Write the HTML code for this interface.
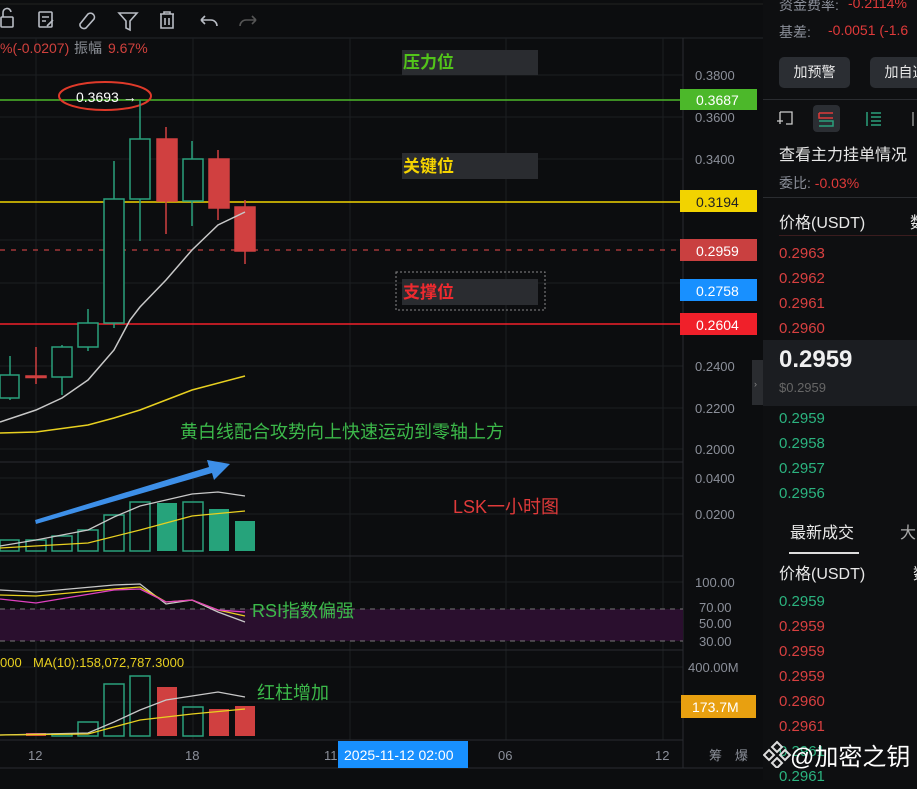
<!DOCTYPE html>
<html><head><meta charset="utf-8"><style>
html,body{margin:0;padding:0;width:917px;height:780px;overflow:hidden;background:#0c0d0f;font-family:"Liberation Sans","Noto Sans CJK SC",sans-serif}
.r{position:absolute;left:763px;top:0;width:154px;height:780px;background:#0e0f11;color:#e8e8e8}
.t{position:absolute;white-space:nowrap}
</style></head><body>
<svg width="917" height="780" style="position:absolute;left:0;top:0" font-family="Liberation Sans, Noto Sans CJK SC, sans-serif">
<rect x="0" y="0" width="763" height="780" fill="#0c0d0f"/>
<line x1="0" y1="4" x2="763" y2="4" stroke="#222" />
<line x1="0" y1="38" x2="763" y2="38" stroke="#25272b"/>
<g stroke="#b8bcc4" stroke-width="1.6" fill="none">
<rect x="1" y="17" width="12" height="10" rx="1"/><path d="M3 17v-4a4 4 0 0 1 8 -1"/>
<rect x="39" y="12" width="13" height="15" rx="1"/><path d="M42 17h7M42 21h4M47 26l6-6"/>
<path d="M80 24l8-10a4 4 0 0 1 6 5l-8 9a4 4 0 0 1-6-4z"/>
<path d="M119 13h18l-7 8v9l-4-2v-7z"/>
<path d="M160 14h14M164 14v-2h6v2M161 14v14h12v-14M165 18v7M169 18v7"/>
<path d="M201 20h10a6 6 0 0 1 6 6M201 20l4-4M201 20l4 4"/>
</g>
<path d="M256 20h-10a6 6 0 0 0-6 6M256 20l-4-4M256 20l-4 4" stroke="#555" stroke-width="1.6" fill="none"/>
<g stroke="#1c1e22" stroke-width="1">
<line x1="36" y1="38" x2="36" y2="740"/><line x1="193" y1="38" x2="193" y2="740"/><line x1="350" y1="38" x2="350" y2="740"/><line x1="506" y1="38" x2="506" y2="740"/><line x1="663" y1="38" x2="663" y2="740"/>
<line x1="0" y1="75" x2="683" y2="75"/><line x1="0" y1="117" x2="683" y2="117"/><line x1="0" y1="159" x2="683" y2="159"/><line x1="0" y1="240" x2="683" y2="240"/><line x1="0" y1="283" x2="683" y2="283"/><line x1="0" y1="366" x2="683" y2="366"/><line x1="0" y1="408" x2="683" y2="408"/><line x1="0" y1="449" x2="683" y2="449"/>
<line x1="0" y1="478" x2="683" y2="478"/><line x1="0" y1="514" x2="683" y2="514"/><line x1="0" y1="582" x2="683" y2="582"/><line x1="0" y1="667" x2="683" y2="667"/><line x1="0" y1="702" x2="683" y2="702"/>
</g>
<g stroke="#2a2c30"><line x1="0" y1="462" x2="683" y2="462"/><line x1="0" y1="556" x2="683" y2="556"/><line x1="0" y1="650" x2="683" y2="650"/><line x1="0" y1="740" x2="683" y2="740"/><line x1="683" y1="38" x2="683" y2="768"/></g>
<line x1="0" y1="768" x2="763" y2="768" stroke="#2a2c30"/>
<line x1="0" y1="100" x2="683" y2="100" stroke="#4cb82a" stroke-width="1.5"/>
<line x1="0" y1="202" x2="683" y2="202" stroke="#f2d300" stroke-width="1.5"/>
<line x1="0" y1="250" x2="683" y2="250" stroke="#c04040" stroke-width="1.2" stroke-dasharray="5,6"/>
<line x1="0" y1="324" x2="683" y2="324" stroke="#f0202a" stroke-width="1.5"/>
<text x="0" y="53" font-size="14" fill="#d0413d">%(-0.0207)</text><text x="74" y="53" font-size="14" fill="#8b8f96">振幅</text><text x="108" y="53" font-size="14" fill="#d0413d">9.67%</text>
<rect x="402" y="50" width="136" height="25" fill="#2a2c30"/><text x="403" y="68" font-size="17" font-weight="bold" fill="#52c41a">压力位</text>
<rect x="402" y="153" width="136" height="26" fill="#2a2c30"/><text x="403" y="172" font-size="17" font-weight="bold" fill="#f5d400">关键位</text>
<rect x="396" y="272" width="149" height="38" fill="none" stroke="#888" stroke-dasharray="2,2"/>
<rect x="402" y="279" width="136" height="26" fill="#2a2c30"/><text x="403" y="298" font-size="17" font-weight="bold" fill="#ee2a2f">支撑位</text>
<ellipse cx="105" cy="96" rx="46" ry="14" fill="none" stroke="#e03a2a" stroke-width="2"/>
<text x="76" y="102" font-size="14" fill="#fff">0.3693 →</text>
<g stroke="#2aa07c" stroke-width="1.5" fill="none">
<line x1="10" y1="356" x2="10" y2="400"/><rect x="0" y="375" width="19" height="23" fill="#0c0d0f"/>
<line x1="62" y1="345" x2="62" y2="395"/><rect x="52" y="347" width="20" height="30" fill="#0c0d0f"/>
<line x1="88" y1="309" x2="88" y2="351"/><rect x="78" y="323" width="20" height="24" fill="#0c0d0f"/>
<line x1="114" y1="161" x2="114" y2="328"/><rect x="104" y="199" width="20" height="124" fill="#0c0d0f"/>
<line x1="140" y1="100" x2="140" y2="241"/><rect x="130" y="139" width="20" height="60" fill="#0c0d0f"/>
<line x1="192" y1="141" x2="192" y2="226"/><rect x="183" y="159" width="20" height="42" fill="#0c0d0f"/>
</g>
<g stroke="#d04040" stroke-width="1.5" fill="#d04040">
<line x1="36" y1="347" x2="36" y2="384"/><rect x="26" y="376" width="20" height="1.5"/>
<line x1="166" y1="127" x2="166" y2="234"/><rect x="157" y="139" width="20" height="62"/>
<line x1="218" y1="150" x2="218" y2="220"/><rect x="209" y="159" width="20" height="49"/>
<line x1="245" y1="200" x2="245" y2="264"/><rect x="235" y="207" width="20" height="44"/>
</g>
<polyline points="0,422 36,410 62,398 88,380 114,350 130,320 140,307 166,280 192,250 218,225 245,212" fill="none" stroke="#c8c8c8" stroke-width="1.5"/>
<polyline points="0,433 36,432 88,425 114,418 140,410 166,400 192,390 245,376" fill="none" stroke="#e8d020" stroke-width="1.5"/>
<text x="180" y="438" font-size="18" fill="#3cb94a">黄白线配合攻势向上快速运动到零轴上方</text>
<g stroke="#2aa07c" stroke-width="1.5" fill="none">
<rect x="0" y="540" width="19" height="11"/><rect x="26" y="540" width="20" height="11"/><rect x="52" y="536" width="20" height="15"/><rect x="78" y="530" width="20" height="21"/><rect x="104" y="515" width="20" height="36"/><rect x="130" y="502" width="20" height="49"/><rect x="183" y="502" width="20" height="49"/>
</g>
<g fill="#26a37b"><rect x="157" y="503" width="20" height="48"/><rect x="209" y="509" width="20" height="42"/><rect x="235" y="521" width="20" height="30"/></g>
<polyline points="0,546 36,540 88,530 114,517 140,506 166,500 192,494 218,492 245,496" fill="none" stroke="#c8c8c8" stroke-width="1.3"/>
<polyline points="0,548 88,543 140,530 192,516 245,511" fill="none" stroke="#e8d020" stroke-width="1.3"/>
<polygon points="35,520 209,467 207,460 230,464 214,480 212,473 36,524" fill="#3d8fe8"/>
<text x="453" y="513" font-size="18" fill="#e03a3a">LSK一小时图</text>
<rect x="0" y="609" width="683" height="32" fill="#2a0f2e"/>
<line x1="0" y1="609" x2="683" y2="609" stroke="#777" stroke-dasharray="5,5"/>
<line x1="0" y1="641" x2="683" y2="641" stroke="#777" stroke-dasharray="5,5"/>
<polyline points="0,590 36,592 114,585 140,584 166,604 192,600 218,612 245,622" fill="none" stroke="#c8c8c8" stroke-width="1.3"/>
<polyline points="0,595 36,596 114,589 140,587 166,602 192,600 218,610 245,616" fill="none" stroke="#e8d020" stroke-width="1.3"/>
<polyline points="0,599 36,603 114,590 140,589 166,602 192,600 218,610 245,612" fill="none" stroke="#e040c0" stroke-width="1.3"/>
<text x="252" y="617" font-size="18" fill="#3cb94a">RSI指数偏强</text>
<text x="0" y="667" font-size="13" fill="#e8d020">000</text><text x="33" y="667" font-size="13" fill="#e8d020">MA(10):158,072,787.3000</text>
<rect x="26" y="733" width="20" height="3" fill="#d04040"/>
<g stroke="#2aa07c" stroke-width="1.5" fill="none">
<rect x="52" y="734" width="20" height="2"/><rect x="78" y="722" width="20" height="14"/><rect x="104" y="684" width="20" height="52"/><rect x="130" y="676" width="20" height="60"/><rect x="183" y="707" width="20" height="29"/>
</g>
<g fill="#d04040"><rect x="157" y="687" width="20" height="49"/><rect x="209" y="709" width="20" height="27"/><rect x="235" y="706" width="20" height="30"/></g>
<polyline points="0,735 88,733 114,722 140,710 166,700 192,696 218,692 245,697" fill="none" stroke="#c8c8c8" stroke-width="1.3"/>
<polyline points="0,735 88,734 140,720 166,717 192,714 245,709" fill="none" stroke="#e8d020" stroke-width="1.3"/>
<text x="257" y="699" font-size="18" fill="#3cb94a">红柱增加</text>
<g font-size="13" fill="#8b8f99">
<text x="695" y="80">0.3800</text><text x="695" y="122">0.3600</text><text x="695" y="164">0.3400</text><text x="695" y="371">0.2400</text><text x="695" y="413">0.2200</text><text x="695" y="454">0.2000</text><text x="695" y="483">0.0400</text><text x="695" y="519">0.0200</text>
<text x="695" y="587">100.00</text><text x="699" y="612">70.00</text><text x="699" y="628">50.00</text><text x="699" y="646">30.00</text><text x="688" y="672">400.00M</text>
<text x="28" y="760">12</text><text x="185" y="760">18</text><text x="324" y="760">11</text><text x="498" y="760">06</text><text x="655" y="760">12</text><text x="709" y="760">筹</text><text x="735" y="760">爆</text>
</g>
<rect x="680" y="89" width="77" height="21" fill="#4cb82a"/><text x="696" y="105" font-size="14" fill="#fff">0.3687</text>
<rect x="680" y="190" width="77" height="22" fill="#f2d300"/><text x="696" y="207" font-size="14" fill="#222">0.3194</text>
<rect x="680" y="239" width="77" height="22" fill="#c94040"/><text x="696" y="256" font-size="14" fill="#fff">0.2959</text>
<rect x="680" y="279" width="77" height="22" fill="#1890ff"/><text x="696" y="296" font-size="14" fill="#fff">0.2758</text>
<rect x="680" y="313" width="77" height="22" fill="#f0202a"/><text x="696" y="330" font-size="14" fill="#fff">0.2604</text>
<rect x="681" y="695" width="75" height="23" fill="#e8a010"/><text x="692" y="712" font-size="14" fill="#fff">173.7M</text>
<rect x="338" y="741" width="130" height="27" fill="#1890ff"/><text x="344" y="760" font-size="14" fill="#fff">2025-11-12 02:00</text>
<rect x="752" y="360" width="11" height="45" fill="#2a2c30"/><text x="754" y="387" font-size="9" fill="#888">›</text>
</svg>
<div class="r">
<div class="t" style="left:16px;top:-5px;font-size:14px;color:#8b8f99">资金费率:</div><div class="t" style="left:85px;top:-5px;font-size:14px;color:#e03a3a">-0.2114%</div>
<div class="t" style="left:16px;top:22px;font-size:14px;color:#8b8f99">基差:</div><div class="t" style="left:65px;top:22px;font-size:14px;color:#e03a3a">-0.0051 (-1.6</div>
<div class="t" style="left:16px;top:57px;width:71px;height:31px;background:#2b2e33;border-radius:5px;font-size:14px;line-height:31px;text-align:center">加预警</div>
<div class="t" style="left:107px;top:57px;width:71px;height:31px;background:#2b2e33;border-radius:5px;font-size:14px;line-height:31px;text-align:center">加自选</div>
<div class="t" style="left:0;top:99px;width:154px;height:1px;background:#2a2c30"></div>
<div class="t" style="left:50px;top:105px;width:27px;height:27px;background:#2b2e33;border-radius:4px"></div>
<svg class="t" style="left:0;top:104px" width="154" height="30"><g stroke="#ccc" stroke-width="1.3" fill="none"><path d="M17 8h12v12h-6M17 8v6M14 17h6M17 14v6"/></g>
<path d="M56 9h14M56 9v5h14" stroke="#e03a3a" stroke-width="1.5" fill="none"/><path d="M56 17h14v5h-14" stroke="#2aa07c" stroke-width="1.5" fill="none"/>
<path d="M104 8v14M108 9h10M108 13h10M108 17h10M108 21h10" stroke="#2aa07c" stroke-width="1.5"/><path d="M150 8v14" stroke="#ccc"/></svg>
<div class="t" style="left:16px;top:141px;font-size:16px">查看主力挂单情况</div>
<div class="t" style="left:16px;top:173px;font-size:14px;color:#8b8f99">委比: <span style="color:#e03a3a">-0.03%</span></div>
<div class="t" style="left:0;top:197px;width:154px;height:1px;background:#2a2c30"></div>
<div class="t" style="left:16px;top:209px;font-size:16px">价格(USDT)</div><div class="t" style="left:147px;top:209px;font-size:16px">数</div>
<div class="t" style="left:16px;top:235px;width:138px;height:1px;background:#3a1c1e"></div>
<div class="t" style="left:16px;top:241px;font-size:15px;line-height:25px;color:#d84040">0.2963<br>0.2962<br>0.2961<br>0.2960</div>
<div class="t" style="left:0;top:340px;width:154px;height:66px;background:#1b1d21"></div>
<div class="t" style="left:16px;top:346px;font-size:24px;font-weight:bold;color:#f0f0f0">0.2959</div>
<div class="t" style="left:16px;top:380px;font-size:13px;color:#666">$0.2959</div>
<div class="t" style="left:16px;top:406px;font-size:15px;line-height:25px;color:#2bb37f">0.2959<br>0.2958<br>0.2957<br>0.2956</div>
<div class="t" style="left:27px;top:519px;font-size:16px">最新成交</div><div class="t" style="left:137px;top:519px;font-size:16px;color:#aaa">大</div>
<div class="t" style="left:26px;top:552px;width:70px;height:2px;background:#ddd"></div>
<div class="t" style="left:16px;top:560px;font-size:16px">价格(USDT)</div><div class="t" style="left:150px;top:560px;font-size:16px">数</div>
<div class="t" style="left:16px;top:589px;font-size:15px;line-height:25px;color:#d84040"><span style="color:#2bb37f">0.2959</span><br>0.2959<br>0.2959<br>0.2959<br>0.2960<br>0.2961<br><span style="color:#2bb37f">0.2961</span><br><span style="color:#2bb37f">0.2961</span></div>
<svg class="t" style="left:0;top:738px" width="30" height="30"><g fill="none" stroke="#ddd" stroke-width="2"><path d="M14 4l5 5-5 5-5-5zM6 12l5 5-5 5-5-5zM22 12l5 5-5 5-5-5zM14 20l5 5-5 5-5-5z"/></g></svg>
<div class="t" style="left:27px;top:737px;font-size:24px;color:#fff">@加密之钥</div>
</div>
</body></html>
